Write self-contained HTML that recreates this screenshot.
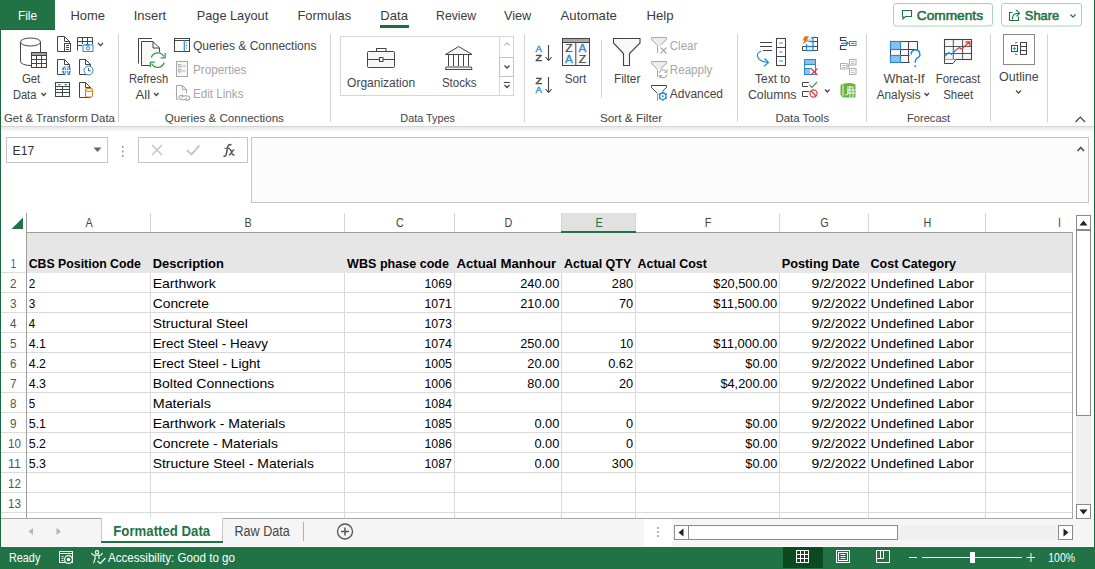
<!DOCTYPE html>
<html><head><meta charset="utf-8"><title>Excel</title>
<style>
html,body{margin:0;padding:0;background:#fff;overflow:hidden}
body{width:1095px;height:569px;position:relative}
svg{position:absolute;left:0;top:0;display:block}
text{font-family:"Liberation Sans",sans-serif}
</style></head><body>
<svg width="1095" height="569" viewBox="0 0 1095 569">
<rect x="0" y="0" width="1095" height="569" fill="#ffffff" />
<rect x="0" y="0" width="55" height="30" fill="#217346" />
<rect x="0" y="29" width="55" height="1" fill="#1b6a3d" />
<text x="17.9" y="20" font-size="13" fill="#ffffff" textLength="19.1" lengthAdjust="spacingAndGlyphs">File</text>
<text x="70.4" y="20" font-size="13" fill="#3b3b3b" textLength="34.6" lengthAdjust="spacingAndGlyphs">Home</text>
<text x="133.7" y="20" font-size="13" fill="#3b3b3b" textLength="32.5" lengthAdjust="spacingAndGlyphs">Insert</text>
<text x="196.8" y="20" font-size="13" fill="#3b3b3b" textLength="71.4" lengthAdjust="spacingAndGlyphs">Page Layout</text>
<text x="297.5" y="20" font-size="13" fill="#3b3b3b" textLength="53.7" lengthAdjust="spacingAndGlyphs">Formulas</text>
<text x="380.3" y="20" font-size="13" fill="#3b3b3b" textLength="27.7" lengthAdjust="spacingAndGlyphs">Data</text>
<text x="436.1" y="20" font-size="13" fill="#3b3b3b" textLength="40.1" lengthAdjust="spacingAndGlyphs">Review</text>
<text x="503.9" y="20" font-size="13" fill="#3b3b3b" textLength="27.3" lengthAdjust="spacingAndGlyphs">View</text>
<text x="560.6" y="20" font-size="13" fill="#3b3b3b" textLength="56.3" lengthAdjust="spacingAndGlyphs">Automate</text>
<text x="646.5" y="20" font-size="13" fill="#3b3b3b" textLength="27.1" lengthAdjust="spacingAndGlyphs">Help</text>
<rect x="380" y="25" width="29" height="3" fill="#1e6e3f" />
<rect x="893.5" y="3.5" width="99" height="22.5" rx="2.5" fill="#fff" stroke="#a9d3b5" stroke-width="1"/>
<rect x="1001.5" y="3.5" width="80" height="22.5" rx="2.5" fill="#fff" stroke="#a9d3b5" stroke-width="1"/>
<g stroke="#217346" stroke-width="0.55">
<text x="916.8" y="19.6" font-size="13" fill="#217346" textLength="66.2" lengthAdjust="spacingAndGlyphs">Comments</text>
<text x="1024.8" y="19.6" font-size="13" fill="#217346" textLength="34.4" lengthAdjust="spacingAndGlyphs">Share</text>
</g>
<rect x="0" y="126" width="1095" height="1" fill="#d6d6d6" />
<defs><linearGradient id="shd" x1="0" y1="0" x2="0" y2="1"><stop offset="0" stop-color="#e8e8e8"/><stop offset="1" stop-color="#ffffff"/></linearGradient></defs>
<rect x="0" y="127" width="1095" height="5" fill="url(#shd)" />
<rect x="118" y="34" width="1" height="88" fill="#d4d4d4" />
<rect x="330" y="34" width="1" height="88" fill="#d4d4d4" />
<rect x="524" y="34" width="1" height="88" fill="#d4d4d4" />
<rect x="737" y="34" width="1" height="88" fill="#d4d4d4" />
<rect x="866" y="34" width="1" height="88" fill="#d4d4d4" />
<rect x="990" y="34" width="1" height="88" fill="#d4d4d4" />
<rect x="1047" y="34" width="1" height="88" fill="#d4d4d4" />
<rect x="601" y="40" width="1" height="58" fill="#d4d4d4" />
<rect x="340.5" y="36.5" width="173" height="59" fill="#fff" stroke="#d6d6d6"/>
<text x="4.0" y="122" font-size="11.3" fill="#444444" textLength="110.9" lengthAdjust="spacingAndGlyphs">Get &amp; Transform Data</text>
<text x="164.7" y="122" font-size="11.3" fill="#444444" textLength="119.2" lengthAdjust="spacingAndGlyphs">Queries &amp; Connections</text>
<text x="400.3" y="122" font-size="11.3" fill="#444444" textLength="54.7" lengthAdjust="spacingAndGlyphs">Data Types</text>
<text x="599.9" y="122" font-size="11.3" fill="#444444" textLength="62.3" lengthAdjust="spacingAndGlyphs">Sort &amp; Filter</text>
<text x="775.4" y="122" font-size="11.3" fill="#444444" textLength="53.7" lengthAdjust="spacingAndGlyphs">Data Tools</text>
<text x="907.1" y="122" font-size="11.3" fill="#444444" textLength="43.1" lengthAdjust="spacingAndGlyphs">Forecast</text>
<text x="21.9" y="83" font-size="12" fill="#444444" textLength="18.4" lengthAdjust="spacingAndGlyphs">Get</text>
<text x="12.9" y="99" font-size="12" fill="#444444" textLength="23.5" lengthAdjust="spacingAndGlyphs">Data</text>
<text x="129.0" y="83" font-size="12" fill="#444444" textLength="39.1" lengthAdjust="spacingAndGlyphs">Refresh</text>
<text x="135.5" y="99" font-size="12" fill="#444444" textLength="14.6" lengthAdjust="spacingAndGlyphs">All</text>
<text x="192.9" y="50" font-size="12" fill="#444444" textLength="123.6" lengthAdjust="spacingAndGlyphs">Queries &amp; Connections</text>
<text x="192.9" y="74" font-size="12" fill="#a6a6a6" textLength="53.6" lengthAdjust="spacingAndGlyphs">Properties</text>
<text x="192.9" y="97.5" font-size="12" fill="#a6a6a6" textLength="50.6" lengthAdjust="spacingAndGlyphs">Edit Links</text>
<text x="347.1" y="87" font-size="12" fill="#444444" textLength="68.0" lengthAdjust="spacingAndGlyphs">Organization</text>
<text x="441.9" y="87" font-size="12" fill="#444444" textLength="34.6" lengthAdjust="spacingAndGlyphs">Stocks</text>
<text x="564.7" y="83" font-size="12" fill="#444444" textLength="21.5" lengthAdjust="spacingAndGlyphs">Sort</text>
<text x="613.9" y="83" font-size="12" fill="#444444" textLength="26.6" lengthAdjust="spacingAndGlyphs">Filter</text>
<text x="669.8" y="50" font-size="12" fill="#a6a6a6" textLength="27.5" lengthAdjust="spacingAndGlyphs">Clear</text>
<text x="669.8" y="74" font-size="12" fill="#a6a6a6" textLength="42.6" lengthAdjust="spacingAndGlyphs">Reapply</text>
<text x="669.8" y="97.5" font-size="12" fill="#444444" textLength="53.2" lengthAdjust="spacingAndGlyphs">Advanced</text>
<text x="755.1" y="83" font-size="12" fill="#444444" textLength="35.1" lengthAdjust="spacingAndGlyphs">Text to</text>
<text x="747.9" y="99" font-size="12" fill="#444444" textLength="48.6" lengthAdjust="spacingAndGlyphs">Columns</text>
<text x="883.5" y="83" font-size="12" fill="#444444" textLength="41.0" lengthAdjust="spacingAndGlyphs">What-If</text>
<text x="876.7" y="99" font-size="12" fill="#444444" textLength="43.9" lengthAdjust="spacingAndGlyphs">Analysis</text>
<text x="935.7" y="83" font-size="12" fill="#444444" textLength="44.5" lengthAdjust="spacingAndGlyphs">Forecast</text>
<text x="943.2" y="99" font-size="12" fill="#444444" textLength="30.0" lengthAdjust="spacingAndGlyphs">Sheet</text>
<text x="999.0" y="81" font-size="12" fill="#444444" textLength="39.6" lengthAdjust="spacingAndGlyphs">Outline</text>
<rect x="6.5" y="137.5" width="101" height="25" fill="#fff" stroke="#c6c6c6"/>
<text x="12.5" y="155.2" font-size="13" fill="#333" textLength="21.8" lengthAdjust="spacingAndGlyphs">E17</text>
<path d="M93.5 147.5 L101.5 147.5 L97.5 152 Z" fill="#666"/>
<rect x="122" y="146" width="1.5" height="2" fill="#999" />
<rect x="122" y="150.5" width="1.5" height="2" fill="#999" />
<rect x="122" y="155" width="1.5" height="2" fill="#999" />
<rect x="138.5" y="137.5" width="109" height="25" fill="#fff" stroke="#c6c6c6"/>
<rect x="251.5" y="137.5" width="837" height="65" fill="#fcfcfc" stroke="#c6c6c6"/>
<rect x="561" y="213" width="74" height="19" fill="#e1e1e1" />
<rect x="150" y="213" width="1" height="19" fill="#d6d6d6" />
<rect x="344" y="213" width="1" height="19" fill="#d6d6d6" />
<rect x="454" y="213" width="1" height="19" fill="#d6d6d6" />
<rect x="561" y="213" width="1" height="19" fill="#d6d6d6" />
<rect x="635" y="213" width="1" height="19" fill="#d6d6d6" />
<rect x="779" y="213" width="1" height="19" fill="#d6d6d6" />
<rect x="868" y="213" width="1" height="19" fill="#d6d6d6" />
<rect x="985" y="213" width="1" height="19" fill="#d6d6d6" />
<rect x="27" y="232" width="1046" height="1" fill="#9e9e9e" />
<rect x="561" y="231" width="75" height="2" fill="#217346" />
<text x="85.4" y="227" font-size="13" fill="#444444" textLength="7.2" lengthAdjust="spacingAndGlyphs">A</text>
<text x="244.4" y="227" font-size="13" fill="#444444" textLength="7.2" lengthAdjust="spacingAndGlyphs">B</text>
<text x="396.1" y="227" font-size="13" fill="#444444" textLength="7.8" lengthAdjust="spacingAndGlyphs">C</text>
<text x="504.6" y="227" font-size="13" fill="#444444" textLength="7.8" lengthAdjust="spacingAndGlyphs">D</text>
<text x="595.4" y="227" font-size="13" fill="#217346" textLength="7.2" lengthAdjust="spacingAndGlyphs">E</text>
<text x="704.7" y="227" font-size="13" fill="#444444" textLength="6.5" lengthAdjust="spacingAndGlyphs">F</text>
<text x="820.3" y="227" font-size="13" fill="#444444" textLength="8.4" lengthAdjust="spacingAndGlyphs">G</text>
<text x="923.6" y="227" font-size="13" fill="#444444" textLength="7.8" lengthAdjust="spacingAndGlyphs">H</text>
<text x="1058.1" y="227" font-size="13" fill="#444444" textLength="2.9" lengthAdjust="spacingAndGlyphs">I</text>
<path d="M23 217.5 L23 229 L11.5 229 Z" fill="#217346"/>
<rect x="26" y="213" width="1" height="305" fill="#9e9e9e" />
<rect x="27" y="272" width="1046" height="1" fill="#dadada" />
<rect x="1" y="272" width="25" height="1" fill="#dcdcdc" />
<rect x="27" y="292" width="1046" height="1" fill="#dadada" />
<rect x="1" y="292" width="25" height="1" fill="#dcdcdc" />
<rect x="27" y="312" width="1046" height="1" fill="#dadada" />
<rect x="1" y="312" width="25" height="1" fill="#dcdcdc" />
<rect x="27" y="332" width="1046" height="1" fill="#dadada" />
<rect x="1" y="332" width="25" height="1" fill="#dcdcdc" />
<rect x="27" y="352" width="1046" height="1" fill="#dadada" />
<rect x="1" y="352" width="25" height="1" fill="#dcdcdc" />
<rect x="27" y="372" width="1046" height="1" fill="#dadada" />
<rect x="1" y="372" width="25" height="1" fill="#dcdcdc" />
<rect x="27" y="392" width="1046" height="1" fill="#dadada" />
<rect x="1" y="392" width="25" height="1" fill="#dcdcdc" />
<rect x="27" y="412" width="1046" height="1" fill="#dadada" />
<rect x="1" y="412" width="25" height="1" fill="#dcdcdc" />
<rect x="27" y="432" width="1046" height="1" fill="#dadada" />
<rect x="1" y="432" width="25" height="1" fill="#dcdcdc" />
<rect x="27" y="452" width="1046" height="1" fill="#dadada" />
<rect x="1" y="452" width="25" height="1" fill="#dcdcdc" />
<rect x="27" y="472" width="1046" height="1" fill="#dadada" />
<rect x="1" y="472" width="25" height="1" fill="#dcdcdc" />
<rect x="27" y="492" width="1046" height="1" fill="#dadada" />
<rect x="1" y="492" width="25" height="1" fill="#dcdcdc" />
<rect x="27" y="512" width="1046" height="1" fill="#dadada" />
<rect x="1" y="512" width="25" height="1" fill="#dcdcdc" />
<rect x="27" y="233" width="1046" height="40" fill="#e7e6e6" />
<rect x="150" y="273" width="1" height="245" fill="#dadada" />
<rect x="344" y="273" width="1" height="245" fill="#dadada" />
<rect x="454" y="273" width="1" height="245" fill="#dadada" />
<rect x="561" y="273" width="1" height="245" fill="#dadada" />
<rect x="635" y="273" width="1" height="245" fill="#dadada" />
<rect x="779" y="273" width="1" height="245" fill="#dadada" />
<rect x="868" y="273" width="1" height="245" fill="#dadada" />
<rect x="985" y="273" width="1" height="245" fill="#dadada" />
<rect x="1072" y="232" width="1" height="286" fill="#a8a8a8" />
<rect x="1" y="518" width="1072" height="1" fill="#a8a8a8" />
<text x="10.7" y="268" font-size="13" fill="#555" textLength="5.3" lengthAdjust="spacingAndGlyphs">1</text>
<text x="10.1" y="288" font-size="13" fill="#555" textLength="6.5" lengthAdjust="spacingAndGlyphs">2</text>
<text x="10.1" y="308" font-size="13" fill="#555" textLength="6.5" lengthAdjust="spacingAndGlyphs">3</text>
<text x="10.1" y="328" font-size="13" fill="#555" textLength="6.5" lengthAdjust="spacingAndGlyphs">4</text>
<text x="10.1" y="348" font-size="13" fill="#555" textLength="6.5" lengthAdjust="spacingAndGlyphs">5</text>
<text x="10.1" y="368" font-size="13" fill="#555" textLength="6.5" lengthAdjust="spacingAndGlyphs">6</text>
<text x="10.1" y="388" font-size="13" fill="#555" textLength="6.5" lengthAdjust="spacingAndGlyphs">7</text>
<text x="10.1" y="408" font-size="13" fill="#555" textLength="6.5" lengthAdjust="spacingAndGlyphs">8</text>
<text x="10.1" y="428" font-size="13" fill="#555" textLength="6.5" lengthAdjust="spacingAndGlyphs">9</text>
<text x="7.9" y="448" font-size="13" fill="#555" textLength="13.0" lengthAdjust="spacingAndGlyphs">10</text>
<text x="7.9" y="468" font-size="13" fill="#555" textLength="13.0" lengthAdjust="spacingAndGlyphs">11</text>
<text x="7.9" y="488" font-size="13" fill="#555" textLength="13.0" lengthAdjust="spacingAndGlyphs">12</text>
<text x="7.9" y="508" font-size="13" fill="#555" textLength="13.0" lengthAdjust="spacingAndGlyphs">13</text>
<text x="28.7" y="268" font-size="12.8" fill="#000" font-weight="700" textLength="112.2" lengthAdjust="spacingAndGlyphs">CBS Position Code</text>
<text x="152.7" y="268" font-size="12.8" fill="#000" font-weight="700" textLength="71.1" lengthAdjust="spacingAndGlyphs">Description</text>
<text x="347.1" y="268" font-size="12.8" fill="#000" font-weight="700" textLength="101.9" lengthAdjust="spacingAndGlyphs">WBS phase code</text>
<text x="456.4" y="268" font-size="12.8" fill="#000" font-weight="700" textLength="99.8" lengthAdjust="spacingAndGlyphs">Actual Manhour</text>
<text x="564.0" y="268" font-size="12.8" fill="#000" font-weight="700" textLength="67.3" lengthAdjust="spacingAndGlyphs">Actual QTY</text>
<text x="637.5" y="268" font-size="12.8" fill="#000" font-weight="700" textLength="69.4" lengthAdjust="spacingAndGlyphs">Actual Cost</text>
<text x="781.8" y="268" font-size="12.8" fill="#000" font-weight="700" textLength="77.7" lengthAdjust="spacingAndGlyphs">Posting Date</text>
<text x="870.6" y="268" font-size="12.8" fill="#000" font-weight="700" textLength="85.4" lengthAdjust="spacingAndGlyphs">Cost Category</text>
<text x="28.8" y="288" font-size="13" fill="#000" textLength="6.5" lengthAdjust="spacingAndGlyphs">2</text>
<text x="152.7" y="288" font-size="13" fill="#000" textLength="63.1" lengthAdjust="spacingAndGlyphs">Earthwork</text>
<text x="424.5" y="288" font-size="13" fill="#000" textLength="27.4" lengthAdjust="spacingAndGlyphs">1069</text>
<text x="520.2" y="288" font-size="13" fill="#000" textLength="39.1" lengthAdjust="spacingAndGlyphs">240.00</text>
<text x="611.8" y="288" font-size="13" fill="#000" textLength="21.3" lengthAdjust="spacingAndGlyphs">280</text>
<text x="713.3" y="288" font-size="13" fill="#000" textLength="64.0" lengthAdjust="spacingAndGlyphs">$20,500.00</text>
<text x="811.6" y="288" font-size="13" fill="#000" textLength="54.5" lengthAdjust="spacingAndGlyphs">9/2/2022</text>
<text x="870.6" y="288" font-size="13" fill="#000" textLength="103.4" lengthAdjust="spacingAndGlyphs">Undefined Labor</text>
<text x="28.8" y="308" font-size="13" fill="#000" textLength="6.5" lengthAdjust="spacingAndGlyphs">3</text>
<text x="152.7" y="308" font-size="13" fill="#000" textLength="56.2" lengthAdjust="spacingAndGlyphs">Concrete</text>
<text x="424.5" y="308" font-size="13" fill="#000" textLength="27.4" lengthAdjust="spacingAndGlyphs">1071</text>
<text x="520.2" y="308" font-size="13" fill="#000" textLength="39.1" lengthAdjust="spacingAndGlyphs">210.00</text>
<text x="618.9" y="308" font-size="13" fill="#000" textLength="14.2" lengthAdjust="spacingAndGlyphs">70</text>
<text x="713.3" y="308" font-size="13" fill="#000" textLength="64.0" lengthAdjust="spacingAndGlyphs">$11,500.00</text>
<text x="811.6" y="308" font-size="13" fill="#000" textLength="54.5" lengthAdjust="spacingAndGlyphs">9/2/2022</text>
<text x="870.6" y="308" font-size="13" fill="#000" textLength="103.4" lengthAdjust="spacingAndGlyphs">Undefined Labor</text>
<text x="28.8" y="328" font-size="13" fill="#000" textLength="6.5" lengthAdjust="spacingAndGlyphs">4</text>
<text x="152.7" y="328" font-size="13" fill="#000" textLength="95.1" lengthAdjust="spacingAndGlyphs">Structural Steel</text>
<text x="424.5" y="328" font-size="13" fill="#000" textLength="27.4" lengthAdjust="spacingAndGlyphs">1073</text>
<text x="811.6" y="328" font-size="13" fill="#000" textLength="54.5" lengthAdjust="spacingAndGlyphs">9/2/2022</text>
<text x="870.6" y="328" font-size="13" fill="#000" textLength="103.4" lengthAdjust="spacingAndGlyphs">Undefined Labor</text>
<text x="28.8" y="348" font-size="13" fill="#000" textLength="17.2" lengthAdjust="spacingAndGlyphs">4.1</text>
<text x="152.7" y="348" font-size="13" fill="#000" textLength="115.2" lengthAdjust="spacingAndGlyphs">Erect Steel - Heavy</text>
<text x="424.5" y="348" font-size="13" fill="#000" textLength="27.4" lengthAdjust="spacingAndGlyphs">1074</text>
<text x="520.2" y="348" font-size="13" fill="#000" textLength="39.1" lengthAdjust="spacingAndGlyphs">250.00</text>
<text x="619.9" y="348" font-size="13" fill="#000" textLength="13.2" lengthAdjust="spacingAndGlyphs">10</text>
<text x="713.3" y="348" font-size="13" fill="#000" textLength="64.0" lengthAdjust="spacingAndGlyphs">$11,000.00</text>
<text x="811.6" y="348" font-size="13" fill="#000" textLength="54.5" lengthAdjust="spacingAndGlyphs">9/2/2022</text>
<text x="870.6" y="348" font-size="13" fill="#000" textLength="103.4" lengthAdjust="spacingAndGlyphs">Undefined Labor</text>
<text x="28.8" y="368" font-size="13" fill="#000" textLength="17.2" lengthAdjust="spacingAndGlyphs">4.2</text>
<text x="152.7" y="368" font-size="13" fill="#000" textLength="107.5" lengthAdjust="spacingAndGlyphs">Erect Steel - Light</text>
<text x="424.5" y="368" font-size="13" fill="#000" textLength="27.4" lengthAdjust="spacingAndGlyphs">1005</text>
<text x="527.3" y="368" font-size="13" fill="#000" textLength="32.0" lengthAdjust="spacingAndGlyphs">20.00</text>
<text x="608.2" y="368" font-size="13" fill="#000" textLength="24.9" lengthAdjust="spacingAndGlyphs">0.62</text>
<text x="745.3" y="368" font-size="13" fill="#000" textLength="32.0" lengthAdjust="spacingAndGlyphs">$0.00</text>
<text x="811.6" y="368" font-size="13" fill="#000" textLength="54.5" lengthAdjust="spacingAndGlyphs">9/2/2022</text>
<text x="870.6" y="368" font-size="13" fill="#000" textLength="103.4" lengthAdjust="spacingAndGlyphs">Undefined Labor</text>
<text x="28.8" y="388" font-size="13" fill="#000" textLength="17.2" lengthAdjust="spacingAndGlyphs">4.3</text>
<text x="152.7" y="388" font-size="13" fill="#000" textLength="121.6" lengthAdjust="spacingAndGlyphs">Bolted Connections</text>
<text x="424.5" y="388" font-size="13" fill="#000" textLength="27.4" lengthAdjust="spacingAndGlyphs">1006</text>
<text x="527.3" y="388" font-size="13" fill="#000" textLength="32.0" lengthAdjust="spacingAndGlyphs">80.00</text>
<text x="618.9" y="388" font-size="13" fill="#000" textLength="14.2" lengthAdjust="spacingAndGlyphs">20</text>
<text x="720.4" y="388" font-size="13" fill="#000" textLength="56.9" lengthAdjust="spacingAndGlyphs">$4,200.00</text>
<text x="811.6" y="388" font-size="13" fill="#000" textLength="54.5" lengthAdjust="spacingAndGlyphs">9/2/2022</text>
<text x="870.6" y="388" font-size="13" fill="#000" textLength="103.4" lengthAdjust="spacingAndGlyphs">Undefined Labor</text>
<text x="28.8" y="408" font-size="13" fill="#000" textLength="6.5" lengthAdjust="spacingAndGlyphs">5</text>
<text x="152.7" y="408" font-size="13" fill="#000" textLength="58.2" lengthAdjust="spacingAndGlyphs">Materials</text>
<text x="424.5" y="408" font-size="13" fill="#000" textLength="27.4" lengthAdjust="spacingAndGlyphs">1084</text>
<text x="811.6" y="408" font-size="13" fill="#000" textLength="54.5" lengthAdjust="spacingAndGlyphs">9/2/2022</text>
<text x="870.6" y="408" font-size="13" fill="#000" textLength="103.4" lengthAdjust="spacingAndGlyphs">Undefined Labor</text>
<text x="28.8" y="428" font-size="13" fill="#000" textLength="17.2" lengthAdjust="spacingAndGlyphs">5.1</text>
<text x="152.7" y="428" font-size="13" fill="#000" textLength="132.5" lengthAdjust="spacingAndGlyphs">Earthwork - Materials</text>
<text x="424.5" y="428" font-size="13" fill="#000" textLength="27.4" lengthAdjust="spacingAndGlyphs">1085</text>
<text x="534.4" y="428" font-size="13" fill="#000" textLength="24.9" lengthAdjust="spacingAndGlyphs">0.00</text>
<text x="626.0" y="428" font-size="13" fill="#000" textLength="7.1" lengthAdjust="spacingAndGlyphs">0</text>
<text x="745.3" y="428" font-size="13" fill="#000" textLength="32.0" lengthAdjust="spacingAndGlyphs">$0.00</text>
<text x="811.6" y="428" font-size="13" fill="#000" textLength="54.5" lengthAdjust="spacingAndGlyphs">9/2/2022</text>
<text x="870.6" y="428" font-size="13" fill="#000" textLength="103.4" lengthAdjust="spacingAndGlyphs">Undefined Labor</text>
<text x="28.8" y="448" font-size="13" fill="#000" textLength="17.2" lengthAdjust="spacingAndGlyphs">5.2</text>
<text x="152.7" y="448" font-size="13" fill="#000" textLength="125.2" lengthAdjust="spacingAndGlyphs">Concrete - Materials</text>
<text x="424.5" y="448" font-size="13" fill="#000" textLength="27.4" lengthAdjust="spacingAndGlyphs">1086</text>
<text x="534.4" y="448" font-size="13" fill="#000" textLength="24.9" lengthAdjust="spacingAndGlyphs">0.00</text>
<text x="626.0" y="448" font-size="13" fill="#000" textLength="7.1" lengthAdjust="spacingAndGlyphs">0</text>
<text x="745.3" y="448" font-size="13" fill="#000" textLength="32.0" lengthAdjust="spacingAndGlyphs">$0.00</text>
<text x="811.6" y="448" font-size="13" fill="#000" textLength="54.5" lengthAdjust="spacingAndGlyphs">9/2/2022</text>
<text x="870.6" y="448" font-size="13" fill="#000" textLength="103.4" lengthAdjust="spacingAndGlyphs">Undefined Labor</text>
<text x="28.8" y="468" font-size="13" fill="#000" textLength="17.2" lengthAdjust="spacingAndGlyphs">5.3</text>
<text x="152.7" y="468" font-size="13" fill="#000" textLength="161.2" lengthAdjust="spacingAndGlyphs">Structure Steel - Materials</text>
<text x="424.5" y="468" font-size="13" fill="#000" textLength="27.4" lengthAdjust="spacingAndGlyphs">1087</text>
<text x="534.4" y="468" font-size="13" fill="#000" textLength="24.9" lengthAdjust="spacingAndGlyphs">0.00</text>
<text x="611.8" y="468" font-size="13" fill="#000" textLength="21.3" lengthAdjust="spacingAndGlyphs">300</text>
<text x="745.3" y="468" font-size="13" fill="#000" textLength="32.0" lengthAdjust="spacingAndGlyphs">$0.00</text>
<text x="811.6" y="468" font-size="13" fill="#000" textLength="54.5" lengthAdjust="spacingAndGlyphs">9/2/2022</text>
<text x="870.6" y="468" font-size="13" fill="#000" textLength="103.4" lengthAdjust="spacingAndGlyphs">Undefined Labor</text>
<rect x="1073" y="213" width="21" height="305" fill="#ffffff" />
<rect x="1076" y="416" width="15" height="88" fill="#f0f0f0" />
<rect x="1076.5" y="215.5" width="14" height="14" fill="#fff" stroke="#8a8a8a"/>
<path d="M1079.5 225.5 L1087.5 225.5 L1083.5 220.5 Z" fill="#222"/>
<rect x="1076.5" y="230.5" width="14" height="185" fill="#fff" stroke="#8a8a8a"/>
<rect x="1076.5" y="504.5" width="14" height="14" fill="#fff" stroke="#8a8a8a"/>
<path d="M1079.5 509.5 L1087.5 509.5 L1083.5 514.5 Z" fill="#222"/>
<rect x="1" y="519" width="1093" height="27" fill="#f5f5f5" />
<rect x="1" y="546" width="1093" height="1" fill="#ffffff" />
<path d="M33 528 L28.5 531.5 L33 535 Z" fill="#b5b5b5"/>
<path d="M56.5 528 L61 531.5 L56.5 535 Z" fill="#b5b5b5"/>
<rect x="101" y="518" width="122" height="25" fill="#ffffff" />
<rect x="101" y="518" width="1" height="25" fill="#c8c8c8" />
<rect x="222" y="518" width="1" height="25" fill="#c8c8c8" />
<rect x="101" y="541" width="122" height="2" fill="#217346" />
<text x="113.3" y="536" font-size="13.8" fill="#217346" font-weight="700" textLength="96.9" lengthAdjust="spacingAndGlyphs">Formatted Data</text>
<text x="234.5" y="536" font-size="13.8" fill="#444" textLength="55.2" lengthAdjust="spacingAndGlyphs">Raw Data</text>
<rect x="303" y="522" width="1" height="19" fill="#b0b0b0" />
<circle cx="345" cy="531.5" r="7.5" fill="none" stroke="#555" stroke-width="1.3"/>
<path d="M341 531.5 H349 M345 527.5 V535.5" stroke="#555" stroke-width="1.5"/>
<rect x="644" y="519" width="28" height="27" fill="#ffffff" />
<rect x="657" y="527" width="2" height="2" fill="#b4b4b4" />
<rect x="657" y="531" width="2" height="2" fill="#b4b4b4" />
<rect x="657" y="535" width="2" height="2" fill="#b4b4b4" />
<rect x="674.5" y="525.5" width="398" height="14" fill="#f0f0f0" stroke="none"/>
<rect x="674.5" y="525.5" width="14" height="14" fill="#fff" stroke="#8a8a8a"/>
<path d="M683.5 528.5 L683.5 536.5 L678.5 532.5 Z" fill="#222"/>
<rect x="688.5" y="525.5" width="209" height="14" fill="#fff" stroke="#8a8a8a"/>
<rect x="1058.5" y="525.5" width="14" height="14" fill="#fff" stroke="#8a8a8a"/>
<path d="M1063.5 528.5 L1063.5 536.5 L1068.5 532.5 Z" fill="#222"/>
<rect x="0" y="547" width="1095" height="22" fill="#217346" />
<text x="9.0" y="561.5" font-size="12.5" fill="#ffffff" textLength="31.3" lengthAdjust="spacingAndGlyphs">Ready</text>
<text x="107.9" y="561.8" font-size="12.5" fill="#ffffff" textLength="127.1" lengthAdjust="spacingAndGlyphs">Accessibility: Good to go</text>
<rect x="783" y="547" width="40" height="21" fill="#0a4a1d" />
<text x="1048.3" y="561.5" font-size="12.5" fill="#ffffff" textLength="26.8" lengthAdjust="spacingAndGlyphs">100%</text>
<rect x="909" y="557" width="8" height="1" fill="#fff" />
<rect x="922" y="557" width="100" height="1" fill="#fff" />
<rect x="970" y="552" width="5" height="11" fill="#fff" />
<rect x="1026.5" y="557" width="8.5" height="1" fill="#fff" />
<rect x="1030.5" y="553" width="1" height="9" fill="#fff" />
<rect x="0" y="30" width="1" height="517" fill="#1b6a3d" />
<rect x="1094" y="0" width="1" height="547" fill="#1b6a3d" />
<path d="M20.5 42 A10 4 0 0 1 40.5 42 A10 4 0 0 1 20.5 42 Z" fill="#fff" stroke="#444444"/>
<path d="M20.5 42 V61.5 A10 4 0 0 0 31 65.5" fill="none" stroke="#444444"/>
<path d="M40.5 42 V52" fill="none" stroke="#444444"/>
<rect x="31.5" y="52.5" width="15" height="15" fill="#fff" stroke="#444444"/>
<rect x="32" y="53" width="14" height="2.5" fill="#a0a0a0"/>
<path d="M31.5 55.5 H46.5 M31.5 59.5 H46.5 M31.5 63.5 H46.5 M36.5 55.5 V67.5 M41.5 55.5 V67.5" stroke="#444444" fill="none"/>
<path d="M41.5 93 L43.75 95.5 L46.0 93" fill="none" stroke="#444444" stroke-width="1.25"/>
<path d="M154 93 L156.25 95.5 L158.5 93" fill="none" stroke="#444444" stroke-width="1.25"/>
<path d="M924.5 93 L926.75 95.5 L929.0 93" fill="none" stroke="#444444" stroke-width="1.25"/>
<path d="M98 43 L100.5 45.7 L103 43" fill="none" stroke="#444444" stroke-width="1.25"/>
<path d="M825 89.5 L827.25 92.0 L829.5 89.5" fill="none" stroke="#444444" stroke-width="1.25"/>
<path d="M1016 90.5 L1018.5 93.2 L1021 90.5" fill="none" stroke="#444444" stroke-width="1.25"/>
<path d="M57.5 36.5 H64.5 L69.5 41.5 V51.5 H57.5 Z" fill="#fff" stroke="#444444"/>
<path d="M64.5 36.5 V41.5 H69.5" fill="none" stroke="#444444"/>
<rect x="64.5" y="43.5" width="6" height="8" fill="#fff" stroke="#444444"/>
<path d="M66 45.5 H69 M66 47.5 H69 M66 49.5 H69" stroke="#444444" stroke-width="1"/>
<path d="M77.5 50.5 V37.5 H92.5 V44 M77.5 41.5 H92.5 M82.5 37.5 V44 M87.5 37.5 V44 M77.5 45.5 H82" fill="none" stroke="#444444"/>
<rect x="83" y="45" width="10" height="6.5" fill="#fff" stroke="#2a8ad4"/>
<rect x="85.5" y="44" width="4" height="1.5" fill="#2a8ad4"/>
<circle cx="88" cy="48.2" r="1.6" fill="none" stroke="#2a8ad4"/>
<path d="M57.5 59.5 H64.5 L69.5 64.5 V74.5 H57.5 Z" fill="#fff" stroke="#444444"/>
<path d="M64.5 59.5 V64.5 H69.5" fill="none" stroke="#444444"/>
<circle cx="66.5" cy="70.5" r="4.5" fill="#2a8ad4"/>
<path d="M62 70.5 H71 M66.5 66 V75" stroke="#fff" stroke-width="0.9"/>
<ellipse cx="66.5" cy="70.5" rx="2" ry="4.3" fill="none" stroke="#fff" stroke-width="0.9"/>
<path d="M79.5 59.5 H85.5 L90.5 64.5 V74.5 H79.5 Z" fill="#fff" stroke="#444444"/>
<path d="M85.5 59.5 V64.5 H90.5" fill="none" stroke="#444444"/>
<circle cx="88.5" cy="70.5" r="4.5" fill="#fff" stroke="#2a8ad4"/>
<path d="M88.5 68 V70.8 H90.8" fill="none" stroke="#444444" stroke-width="0.9"/>
<rect x="55.5" y="82.5" width="14" height="14" fill="#fff" stroke="#444444"/>
<path d="M55.5 86.5 H69.5 M55.5 89.5 H69.5 M55.5 92.5 H69.5 M62.5 86.5 V96.5" stroke="#444444" fill="none"/>
<path d="M57.5 84 H61 L59.25 85.7 Z M64 84 H67.5 L65.75 85.7 Z" fill="#2a8ad4"/>
<path d="M79.5 82.5 H85.5 L90.5 87.5 V97.5 H79.5 Z" fill="#fff" stroke="#444444"/>
<path d="M85.5 82.5 V87.5 H90.5" fill="none" stroke="#444444"/>
<rect x="85.5" y="88.5" width="7" height="8.5" rx="1.8" fill="#fff" stroke="#e07a1f" stroke-width="1.1"/>
<path d="M85.5 90.8 Q89 92.3 92.5 90.8" fill="none" stroke="#e07a1f"/>
<path d="M138.5 63.5 V38.5 H152" fill="none" stroke="#444444"/>
<path d="M141.5 65.5 V41.5 H153 L159.5 48 V52 M150 65.5 H141.5" fill="#f7f7f7" stroke="#444444"/>
<path d="M153 41.5 V48 H159.5" fill="none" stroke="#444444"/>
<path d="M151.3 57.5 A6.8 6.8 0 0 1 163.8 56.5 M164.2 62.5 A6.8 6.8 0 0 1 151.6 63.5" fill="none" stroke="#3a9b4a" stroke-width="1.3"/>
<path d="M165.2 53 V57.8 H160.6" fill="none" stroke="#3a9b4a" stroke-width="1.3"/>
<path d="M150.3 67 V62.2 H154.9" fill="none" stroke="#3a9b4a" stroke-width="1.3"/>
<rect x="174.5" y="38.5" width="15" height="13" fill="#fff" stroke="#444444"/>
<path d="M175 40.5 H189" stroke="#444444" stroke-width="1"/>
<rect x="183.7" y="40" width="1.2" height="11.5" fill="#2a8ad4"/>
<path d="M186.5 42.5 V43.5 M186.5 45 V46 M186.5 47.5 V48.5" stroke="#2a8ad4" stroke-width="1.2"/>
<rect x="176.5" y="61.5" width="11" height="15" fill="#f7f7f7" stroke="#a6a6a6"/>
<rect x="178.5" y="64.5" width="2.5" height="2.5" fill="none" stroke="#a6a6a6" stroke-width="0.8"/>
<rect x="178.5" y="69.5" width="2.5" height="2.5" fill="none" stroke="#a6a6a6" stroke-width="0.8"/>
<path d="M182.5 66 H185.5 M182.5 71 H185.5" stroke="#a6a6a6" stroke-width="0.9"/>
<path d="M176.5 85.5 H182.5 L186.5 89.5 V99.5 H176.5 Z" fill="#fafafa" stroke="#a6a6a6"/>
<path d="M182.5 85.5 V89.5 H186.5" fill="none" stroke="#a6a6a6"/>
<rect x="178" y="93" width="13" height="9" fill="#fff"/>
<path d="M183.5 95.5 Q179 95 178.8 97.5 Q179 100 183.5 99.7 Q186.5 99.5 186.8 97.8" fill="none" stroke="#a6a6a6" stroke-width="1.1"/>
<path d="M181.5 98 Q182 95.8 186 95.8 Q190 96 189.8 98.3 Q189.5 100.7 185.5 100.5" fill="none" stroke="#a6a6a6" stroke-width="1.1"/>
<path d="M499.5 36.5 V95.5 M499.5 57.5 H513.5 M499.5 76.5 H513.5" stroke="#d6d6d6" fill="none"/>
<rect x="499.5" y="57.5" width="14" height="19" fill="#fff" stroke="#c4c4c4"/>
<path d="M504.5 45.5 L507.0 43.0 L509.5 45.5" fill="none" stroke="#c0c0c0" stroke-width="1.25"/>
<path d="M504.5 65.5 L507.0 68.0 L509.5 65.5" fill="none" stroke="#444444" stroke-width="1.25"/>
<path d="M503.8 82.5 H509.8" stroke="#444444"/>
<path d="M504.5 85 L507.0 87.5 L509.5 85" fill="none" stroke="#444444" stroke-width="1.25"/>
<rect x="367.5" y="51.5" width="27" height="16" rx="1" fill="#f7f7f7" stroke="#444444"/>
<rect x="376.5" y="48.5" width="9.5" height="3" fill="#fff" stroke="#444444"/>
<path d="M367.5 59.5 H379 M383 59.5 H394.5" stroke="#444444"/>
<rect x="379.5" y="57.5" width="3.5" height="4" fill="#fff" stroke="#444444"/>
<path d="M445.5 54.5 L458.7 46.5 L472 54.5 Z" fill="#f7f7f7" stroke="#444444"/>
<path d="M448.5 55 V66 M453.5 55 V66 M458.5 55 V66 M463.5 55 V66 M468.5 55 V66" stroke="#444444"/>
<path d="M446 67 H471.5 L472 69.5 H445.5 Z" fill="#f7f7f7" stroke="#444444"/>
<text x="535.5" y="51.5" font-size="9.6" fill="#2a8ad4" stroke="#2a8ad4" stroke-width="0.35" textLength="6.5" lengthAdjust="spacingAndGlyphs">A</text>
<text x="535.5" y="60.8" font-size="9.6" fill="#444444" stroke="#444444" stroke-width="0.35" textLength="6.5" lengthAdjust="spacingAndGlyphs">Z</text>
<text x="535.5" y="83.5" font-size="9.6" fill="#444444" stroke="#444444" stroke-width="0.35" textLength="6.5" lengthAdjust="spacingAndGlyphs">Z</text>
<text x="535.5" y="92.8" font-size="9.6" fill="#2a8ad4" stroke="#2a8ad4" stroke-width="0.35" textLength="6.5" lengthAdjust="spacingAndGlyphs">A</text>
<path d="M548.5 45 V60.5 M545.5 57 L548.5 60.5 L551.5 57" fill="none" stroke="#444444" stroke-width="1.1"/>
<path d="M548.5 77 V92.5 M545.5 89 L548.5 92.5 L551.5 89" fill="none" stroke="#444444" stroke-width="1.1"/>
<rect x="562.5" y="38.5" width="27" height="27" fill="#f8f8f8" stroke="#444444"/>
<rect x="563" y="39" width="26" height="3.5" fill="#a8a8a8"/>
<path d="M562.5 42.5 H589.5 M575.8 42.5 V65.5" stroke="#444444" fill="none"/>
<text x="565.3" y="52" font-size="11" fill="#444444" stroke="#444444" stroke-width="0.2" textLength="7.4" lengthAdjust="spacingAndGlyphs">Z</text>
<text x="565" y="62.7" font-size="11" fill="#2a8ad4" stroke="#2a8ad4" stroke-width="0.3" textLength="7.8" lengthAdjust="spacingAndGlyphs">A</text>
<text x="578.5" y="52" font-size="11" fill="#2a8ad4" stroke="#2a8ad4" stroke-width="0.3" textLength="7.8" lengthAdjust="spacingAndGlyphs">A</text>
<text x="578.8" y="62.7" font-size="11" fill="#444444" stroke="#444444" stroke-width="0.2" textLength="7.4" lengthAdjust="spacingAndGlyphs">Z</text>
<path d="M613.5 38.5 H640 V43 L629.5 53.5 V65.5 H623.5 V53.5 L613.5 43 Z" fill="#f8f8f8" stroke="#444444" stroke-width="1.1"/>
<path d="M651.5 37.5 H666.5 V39.5 L660 45.5 V52.5 H657.5 V45.5 L651.5 39.5 Z" fill="#ececec" stroke="none"/>
<path d="M657.5 53 V45.5 L651.5 39.5 V37.5 H666.5 V39.5 L660 45.5" fill="none" stroke="#a8a8a8"/>
<rect x="658.5" y="46" width="9.5" height="8" fill="#fff"/>
<path d="M660.5 47.5 L666.5 53.5 M666.5 47.5 L660.5 53.5" stroke="#a8a8a8" stroke-width="1.1"/>
<path d="M651.5 61.5 H666.5 V63.5 L660 69.5 V76.5 H657.5 V69.5 L651.5 63.5 Z" fill="#ececec" stroke="none"/>
<path d="M657.5 77 V69.5 L651.5 63.5 V61.5 H666.5 V63.5 L660 69.5" fill="none" stroke="#a8a8a8"/>
<rect x="658" y="69" width="10.5" height="9.5" fill="#fff"/>
<path d="M659.5 72.8 A3.8 3.8 0 0 1 666.7 72 M666.8 74.5 A3.8 3.8 0 0 1 659.5 75.3" fill="none" stroke="#a8a8a8" stroke-width="1.1"/>
<path d="M667 69.5 V72.3 H664.3 M659.3 78.3 V75.5 H662" fill="none" stroke="#a8a8a8" stroke-width="1"/>
<path d="M651.5 85.5 H666.5 V87.5 L660 93.5 V100.5 H657.5 V93.5 L651.5 87.5 Z" fill="#fff" stroke="none"/>
<path d="M657.5 101 V93.5 L651.5 87.5 V85.5 H666.5 V87.5 L660 93.5" fill="none" stroke="#444444"/>
<rect x="657.5" y="91" width="11" height="10.5" fill="#fff"/>
<path d="M665.40 97.70 L666.78 98.50 M662.80 99.20 L662.80 100.80 M660.20 97.70 L658.82 98.50 M660.20 94.70 L658.82 93.90 M662.80 93.20 L662.80 91.60 M665.40 94.70 L666.78 93.90" stroke="#2a8ad4" stroke-width="1.8"/>
<circle cx="662.8" cy="96.2" r="3.2" fill="#fff" stroke="#2a8ad4" stroke-width="1.3"/>
<circle cx="662.8" cy="96.2" r="1" fill="#2a8ad4"/>
<path d="M760 42.5 H772 M760 46.5 H772 M763 50.5 H772" stroke="#444444"/>
<path d="M761.5 51 C755 52.5 755.5 61 768 62.5 M764.5 58.5 L768.5 62.5 L764 66.5" fill="none" stroke="#2a8ad4" stroke-width="1.2"/>
<rect x="776.5" y="38.5" width="9" height="27" fill="#fff" stroke="#444444"/>
<path d="M776.5 47.5 H785.5 M776.5 56.5 H785.5" stroke="#444444"/>
<path d="M779.3 43 H782.7 M779.3 52 H782.7 M779.3 61 H782.7" stroke="#2a8ad4"/>
<path d="M806.5 46.5 H802.5 V50.5 H817.5 V37.5 H813 M813 41.5 H817.5 M813 46.5 H817.5" fill="none" stroke="#444444"/>
<path d="M813 37.5 H811 L808 41.5 Z" fill="#8cc0ea"/>
<path d="M806.5 44 V50.5 H813 V37.5 H811.5 M806.5 46.5 H813 M808.5 41.5 H813" fill="none" stroke="#2a8ad4" stroke-width="1.3"/>
<path d="M804.6 36.2 H809 L807 39.8 H809.2 L802.2 44.8 L804.6 40.6 H802.5 Z" fill="#e8771e"/>
<rect x="804.5" y="59.5" width="11" height="15" fill="#fff" stroke="#2a8ad4"/>
<rect x="805" y="60" width="10" height="4.5" fill="#8cc0ea"/>
<rect x="805" y="69" width="5" height="5" fill="#8cc0ea"/>
<path d="M804.5 64.5 H815.5 M804.5 68.5 H811" stroke="#2a8ad4"/>
<path d="M811 68.5 L817.5 75 M817.5 68.5 L811 75" stroke="#e03c3c" stroke-width="1.2"/>
<path d="M809 82.5 H802.5 V86.5 H808 M809 91.5 H802.5 V96.5 H808" fill="none" stroke="#444444"/>
<path d="M809.5 85 L812 87.5 L817 82" fill="none" stroke="#3aa04a" stroke-width="1.2"/>
<circle cx="813.5" cy="93.5" r="3.6" fill="#fff" stroke="#e03c3c" stroke-width="1.2"/>
<path d="M811 91 L816 96" stroke="#e03c3c" stroke-width="1.2"/>
<path d="M846.5 37.5 H840.5 V40.5 H846 M846.5 45.5 H840.5 V49.5 H846.5" fill="none" stroke="#444444" stroke-width="1.2"/>
<path d="M841 43.3 H848 M845.8 41 L848.2 43.3 L845.8 45.6" fill="none" stroke="#2a8ad4" stroke-width="1.2"/>
<rect x="849.5" y="41.5" width="6.5" height="4" fill="#fff" stroke="#2a8ad4"/>
<path d="M851 43.5 H854.5" stroke="#444444" stroke-width="0.8"/>
<rect x="840.5" y="63.5" width="6.5" height="5.5" fill="#fff" stroke="#b0b0b0"/>
<rect x="849.5" y="59.5" width="6.5" height="5.5" fill="#fff" stroke="#b0b0b0"/>
<rect x="849.5" y="68.5" width="6.5" height="6" fill="#fff" stroke="#b0b0b0"/>
<path d="M847 66 H848.5 L849.5 62 M848.5 66 L849.5 71.5" fill="none" stroke="#b0b0b0"/>
<path d="M842 65.5 H845.5 M842 67.5 H845.5 M851 61.5 H854.5 M851 63.5 H854.5 M851 70.5 H854.5 M851 72.5 H854.5" stroke="#b8b8b8" stroke-width="0.9"/>
<path d="M840.5 85 Q848 81.5 855.5 84.5 V97.5 H843 L840.5 95 Z" fill="#6bb33f"/>
<path d="M843 85 V96 M847 87 L852 87 M850 86 V97.5 M853 86 V97.5 M847 90 H855 M847 93 H855" stroke="#fff" stroke-width="0.9"/>
<path d="M845 94 Q846 96.5 848 94 V88" fill="none" stroke="#fff" stroke-width="1"/>
<rect x="890.5" y="41.5" width="27" height="21" fill="#f8f8f8" stroke="#444444"/>
<path d="M900.5 41.5 V62.5 M908.5 41.5 V62.5 M890.5 49.5 H917.5 M890.5 55.5 H917.5" stroke="#444444" fill="none"/>
<rect x="890.5" y="41.5" width="10" height="8" fill="#8cc0ea" stroke="#2a8ad4" stroke-width="1.2"/>
<rect x="890.5" y="55.5" width="10" height="7" fill="#8cc0ea" stroke="#2a8ad4" stroke-width="1.2"/>
<rect x="909.5" y="50.5" width="12" height="18" fill="#fff"/>
<path d="M917.5 49.5 V50.5 M908.5 62.5 H909.5" stroke="#444444"/>
<path d="M911.2 54.5 A4.3 4.3 0 1 1 917 58.2 Q915.2 59.3 915.2 62.8" fill="none" stroke="#2a8ad4" stroke-width="1.5"/>
<circle cx="915.2" cy="66.3" r="1" fill="#2a8ad4"/>
<rect x="944.5" y="39.5" width="27" height="20" fill="#f8f8f8" stroke="#444444" stroke-width="1.1"/>
<path d="M944.5 46.5 H971.5 M944.5 53.5 H971.5 M953.3 39.5 V59.5 M962.6 39.5 V59.5" stroke="#444444" stroke-width="0.9"/>
<path d="M944.5 59.5 V63.5 H953 L956 59.5" fill="#fff" stroke="#444444"/>
<path d="M945 56 L949 52.5 L951.5 54.5 L956.5 49.5" fill="none" stroke="#2a8ad4" stroke-width="1.3"/>
<path d="M956.5 49.5 L959.5 47.5 L961.5 49 L969.5 42 M965.5 42 H969.8 V46" fill="none" stroke="#e03c3c" stroke-width="1.3"/>
<rect x="1003.5" y="34.5" width="31" height="30" fill="#fff" stroke="#8a8a8a"/>
<rect x="1011.5" y="45.5" width="6" height="6" fill="#fff" stroke="#444444"/>
<path d="M1014.5 46.8 V50.2 M1012.8 48.5 H1016.2" stroke="#2a8ad4" stroke-width="1.1"/>
<path d="M1017.5 42.5 H1015.5 V43.5 M1017.5 54.5 H1015.5 V53.5" fill="none" stroke="#777"/>
<rect x="1020.5" y="42.5" width="6" height="12" fill="#fff" stroke="#444444"/>
<path d="M1020.5 46.5 H1026.5 M1020.5 50.5 H1026.5" stroke="#444444"/>
<path d="M1075.5 122 L1080.3 117.2 L1085 122" fill="none" stroke="#444444" stroke-width="1.2"/>
<path d="M902.5 10.5 H911.5 V16.5 H905.5 L903 19 V16.5 H902.5 Z" fill="none" stroke="#217346" stroke-width="1.1"/>
<path d="M1012.5 12.5 H1009.5 V20.5 H1018.5 V16.5" fill="none" stroke="#217346" stroke-width="1.1"/>
<path d="M1012.5 19.5 Q1012 13.5 1018.5 13.2 M1016.2 10 L1019.5 13.2 L1016.5 16.3" fill="none" stroke="#217346" stroke-width="1.1"/>
<path d="M1070.5 14.5 L1073.0 17.2 L1075.5 14.5" fill="none" stroke="#217346" stroke-width="1.2"/>
<path d="M152 145 L162 155 M162 145 L152 155" stroke="#c4c4c4" stroke-width="1.5"/>
<path d="M187 150 L191.5 154.5 L199.5 145.5" fill="none" stroke="#cbcbcb" stroke-width="2.2"/>
<path d="M231.5 145 Q228.5 143.5 227.8 147 L226.2 154.5 Q225.5 157 223.5 156" fill="none" stroke="#555" stroke-width="1.5"/>
<path d="M224.5 148.3 H230" stroke="#555" stroke-width="1"/>
<path d="M229.3 149.5 Q230.5 149 231.2 151 L232.3 154 Q233 155.5 234.5 154.8 M234.3 149.6 Q233.3 149.8 231.7 152.2 L230.5 154 Q229.8 155.3 228.8 154.7" fill="none" stroke="#555" stroke-width="1.4"/>
<path d="M1077.5 151 L1080.8 147.5 L1084 151" fill="none" stroke="#555" stroke-width="1.8"/>
<rect x="59.5" y="551.5" width="13" height="11" fill="none" stroke="#fff"/>
<path d="M59.5 553.5 H72.5 M61.5 556.5 H63.5 M61.5 558.5 H63.5 M61.5 560.5 H63.5" stroke="#fff"/>
<circle cx="68.5" cy="559.5" r="3.9" fill="#217346" stroke="#fff" stroke-width="1.1"/>
<circle cx="68.5" cy="559.5" r="1.8" fill="#fff"/>
<circle cx="97" cy="552.3" r="1.7" fill="none" stroke="#fff" stroke-width="1.1"/>
<path d="M91.5 553 Q92.5 555.5 95 555.3 Q97 555 99 555.3 Q101.5 555.5 102.5 553 M95 555.5 Q95.5 559 94.5 560.5 Q93.5 562 94 563.3 M99 555.5 V559" fill="none" stroke="#fff" stroke-width="1.1"/>
<path d="M97.5 561 L100.3 563.5 L105.5 558" fill="none" stroke="#fff" stroke-width="1.1"/>
<rect x="796.5" y="550.5" width="12" height="12" fill="none" stroke="#fff"/>
<path d="M800.5 550.5 V562.5 M804.5 550.5 V562.5 M796.5 554.5 H808.5 M796.5 558.5 H808.5" stroke="#fff"/>
<rect x="836.5" y="550.5" width="13" height="12" fill="none" stroke="#fff"/>
<rect x="838.5" y="552.5" width="9" height="8" fill="none" stroke="#fff"/>
<path d="M840.5 554.5 H845.5 M840.5 556.5 H845.5 M840.5 558.5 H845.5" stroke="#fff" stroke-width="0.9"/>
<path d="M876.5 550.5 H889.5 V562.5 H876.5 Z M880.5 550.5 V558.5 H876.5 M883.5 550.5 V558.5 H880.5" fill="none" stroke="#fff"/>
</svg>
</body></html>
